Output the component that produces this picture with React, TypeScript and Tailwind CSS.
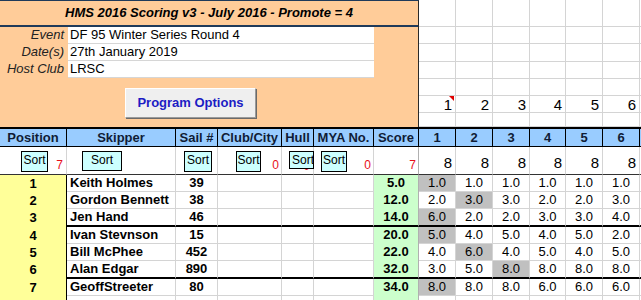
import React from 'react';

type Row = {
  pos: number;
  name: string;
  sail: string;
  score: string;
  races: string[];
  drop: number;
  thick?: boolean;
};

const rows: Row[] = [
  { pos: 1, name: 'Keith Holmes', sail: '39', score: '5.0', races: ['1.0', '1.0', '1.0', '1.0', '1.0', '1.0'], drop: 0 },
  { pos: 2, name: 'Gordon Bennett', sail: '38', score: '12.0', races: ['2.0', '3.0', '3.0', '2.0', '2.0', '3.0'], drop: 1 },
  { pos: 3, name: 'Jen Hand', sail: '46', score: '14.0', races: ['6.0', '2.0', '2.0', '3.0', '3.0', '4.0'], drop: 0, thick: true },
  { pos: 4, name: 'Ivan Stevnson', sail: '15', score: '20.0', races: ['5.0', '4.0', '5.0', '4.0', '5.0', '2.0'], drop: 0 },
  { pos: 5, name: 'Bill McPhee', sail: '452', score: '22.0', races: ['4.0', '6.0', '4.0', '5.0', '4.0', '5.0'], drop: 1 },
  { pos: 6, name: 'Alan Edgar', sail: '890', score: '32.0', races: ['3.0', '5.0', '8.0', '8.0', '8.0', '8.0'], drop: 2, thick: true },
  { pos: 7, name: 'GeoffStreeter', sail: '80', score: '34.0', races: ['8.0', '8.0', '8.0', '6.0', '6.0', '6.0'], drop: 0 },
];

const headers = ['Position', 'Skipper', 'Sail #', 'Club/City', 'Hull', 'MYA No.', 'Score', '1', '2', '3', '4', '5', '6', ''];

const topRowHeights = ['h-[27px]', 'h-[17px]', 'h-[18px]', 'h-[17px]', 'h-[17px]', 'h-[17px]', 'h-[14px]'];

const COLS =
  'grid grid-cols-[67px_109px_42px_64px_32px_60px_45px_37px_37px_37px_36px_37px_37px_21px]';

const SortButton: React.FC<{ className: string }> = ({ className }) => (
  <div
    className={`absolute top-[4px] flex justify-center overflow-hidden whitespace-nowrap border border-black bg-[#ccffff] text-[12px] leading-[16px] ${className}`}
  >
    Sort
  </div>
);

const RedCount: React.FC<{ value: number }> = ({ value }) => (
  <span className="ml-auto text-[12px] leading-[13px] text-[#e8101a]">{value}</span>
);

export default function App() {
  return (
    <div className="w-[641px] h-[300px] overflow-hidden bg-white text-black font-['Liberation_Sans',Arial,sans-serif]">
      {/* top: event panel + empty sheet cells */}
      <div className="flex h-[127px]">
        <div className="w-[419px] shrink-0 bg-[#ffcc99] border-t border-t-[#1f3a5a] border-r border-r-[#2a2a2a]">
          <div className="h-[26px] flex items-center justify-center border-b-2 border-b-[#1f3a5a] text-[13px] font-bold italic">
            HMS 2016 Scoring v3 - July 2016 - Promote = 4
          </div>
          {[
            ['Event', 'DF 95 Winter Series Round 4'],
            ['Date(s)', '27th January 2019'],
            ['Host Club', 'LRSC'],
          ].map(([label, value]) => (
            <div key={label} className="flex h-[17px] text-[13px] leading-[16px]">
              <div className="w-[68px] pr-[4px] text-right italic text-[#222]">{label}</div>
              <div className="w-[306px] pl-[2px] bg-white border-b border-b-[#d6d6d6]">{value}</div>
            </div>
          ))}
          <div className="pt-[10px] pl-[125px]">
            <div className="w-[131px] h-[30px] flex items-center justify-center bg-[#efefef] border border-t-white border-l-white border-r-[#9a9a9a] border-b-[#9a9a9a] shadow-[1px_1px_0_#6a6a6a] text-[13px] font-bold text-[#1c1cc4]">
              Program Options
            </div>
          </div>
        </div>
        <div className="flex-1 overflow-hidden">
          <div className="grid grid-cols-[37px_37px_37px_36px_37px_37px_21px]">
            {topRowHeights.map((h, r) =>
              [0, 1, 2, 3, 4, 5, 6].map((c) => (
                <div
                  key={`${r}-${c}`}
                  className={`${h} relative border-r border-b border-[#d4d4d4] pr-[3px] text-right text-[15px] leading-[17px]`}
                >
                  {r === 5 && c < 6 ? c + 1 : ''}
                  {r === 5 && c === 0 && (
                    <span className="absolute right-[1px] top-0 w-0 h-0 border-l-[5px] border-l-transparent border-t-[5px] border-t-[#e00000]" />
                  )}
                </div>
              ))
            )}
          </div>
        </div>
      </div>

      {/* results table */}
      <div className={COLS}>
        {headers.map((h, i) => (
          <div
            key={`h${i}`}
            className="h-[20px] border-t-2 border-b border-r border-black bg-[#99ccff] text-center text-[13px] font-bold leading-[17px] text-[#101c36]"
          >
            {h}
          </div>
        ))}

        {/* sort row */}
        <div className="relative h-[28px] flex items-end pb-[2px] pr-[3px] border-r border-r-[#d4d4d4] border-b border-b-[#333]">
          <SortButton className="left-[21px] w-[27px] h-[21px]" />
          <RedCount value={7} />
        </div>
        <div className="relative h-[28px] border-r border-r-[#d4d4d4] border-b border-b-[#333]">
          <SortButton className="left-[15px] w-[40px] h-[20px]" />
        </div>
        <div className="relative h-[28px] border-r border-r-[#d4d4d4] border-b border-b-[#333]">
          <SortButton className="left-[8px] w-[28px] h-[21px]" />
        </div>
        <div className="relative h-[28px] flex items-end pb-[2px] pr-[2px] border-r border-r-[#d4d4d4] border-b border-b-[#333]">
          <SortButton className="left-[18px] w-[25px] h-[21px]" />
          <RedCount value={0} />
        </div>
        <div className="relative h-[28px] flex items-end pb-[1px] pr-[3px] border-r border-r-[#d4d4d4] border-b border-b-[#333]">
          <RedCount value={0} />
          <SortButton className="left-[7px] w-[25px] h-[18px] justify-start pl-[2px] z-10" />
        </div>
        <div className="relative h-[28px] flex items-end pb-[2px] pr-[2px] border-r border-r-[#d4d4d4] border-b border-b-[#333]">
          <SortButton className="left-[7px] w-[26px] h-[21px]" />
          <RedCount value={0} />
        </div>
        <div className="relative h-[28px] flex items-end pb-[2px] pr-[2px] border-r border-r-[#b0b0b0] border-b border-b-[#333]">
          <RedCount value={7} />
        </div>
        {[0, 1, 2, 3, 4, 5].map((i) => (
          <div
            key={`s${i}`}
            className="h-[28px] flex items-end justify-end pr-[3px] pb-[3px] border-r border-r-[#d4d4d4] border-b border-b-[#333] text-[15px] leading-[17px]"
          >
            8
          </div>
        ))}
        <div className="h-[28px] border-b border-b-[#333]" />

        {/* data rows */}
        {rows.map((r) => {
          const h = r.thick ? 'h-[18px]' : 'h-[17px]';
          const line = r.thick ? 'border-b-2 border-b-black' : 'border-b border-b-[#d4d4d4]';
          return (
            <React.Fragment key={r.pos}>
              <div className={`${h} bg-[#ffff99] border-r border-r-black text-center text-[13px] font-bold leading-[17px]`}>
                {r.pos}
              </div>
              <div className={`${h} ${line} border-r border-r-[#d4d4d4] pl-[3px] text-[13px] font-bold leading-[16px] whitespace-nowrap`}>
                {r.name}
              </div>
              <div className={`${h} ${line} border-r border-r-[#d4d4d4] text-center text-[13px] font-bold leading-[16px]`}>
                {r.sail}
              </div>
              <div className={`${h} ${line} border-r border-r-[#d4d4d4]`} />
              <div className={`${h} ${line} border-r border-r-[#d4d4d4]`} />
              <div className={`${h} ${line} border-r border-r-[#d4d4d4]`} />
              <div
                className={`${h} bg-[#ccffcc] ${r.thick ? 'border-b-2 border-b-black' : ''} border-r border-r-[#b0b0b0] text-center text-[13px] font-bold leading-[16px]`}
              >
                {r.score}
              </div>
              {r.races.map((v, i) => (
                <div
                  key={i}
                  className={`${h} ${line} border-r border-r-[#d4d4d4] text-center text-[13px] leading-[16px] ${
                    i === r.drop ? 'bg-[#c0c0c0]' : 'bg-white'
                  }`}
                >
                  {v}
                </div>
              ))}
              <div className={`${h} ${line}`} />
            </React.Fragment>
          );
        })}

        {/* partial next row */}
        <div className="h-[10px] bg-[#ffff99] border-r border-r-black" />
        {[1, 2, 3, 4, 5].map((i) => (
          <div key={`p${i}`} className="h-[10px] border-r border-r-[#d4d4d4]" />
        ))}
        <div className="h-[10px] bg-[#ccffcc] border-r border-r-[#b0b0b0]" />
        {[0, 1, 2, 3, 4, 5, 6].map((i) => (
          <div key={`q${i}`} className="h-[10px] border-r border-r-[#d4d4d4]" />
        ))}
      </div>
    </div>
  );
}
